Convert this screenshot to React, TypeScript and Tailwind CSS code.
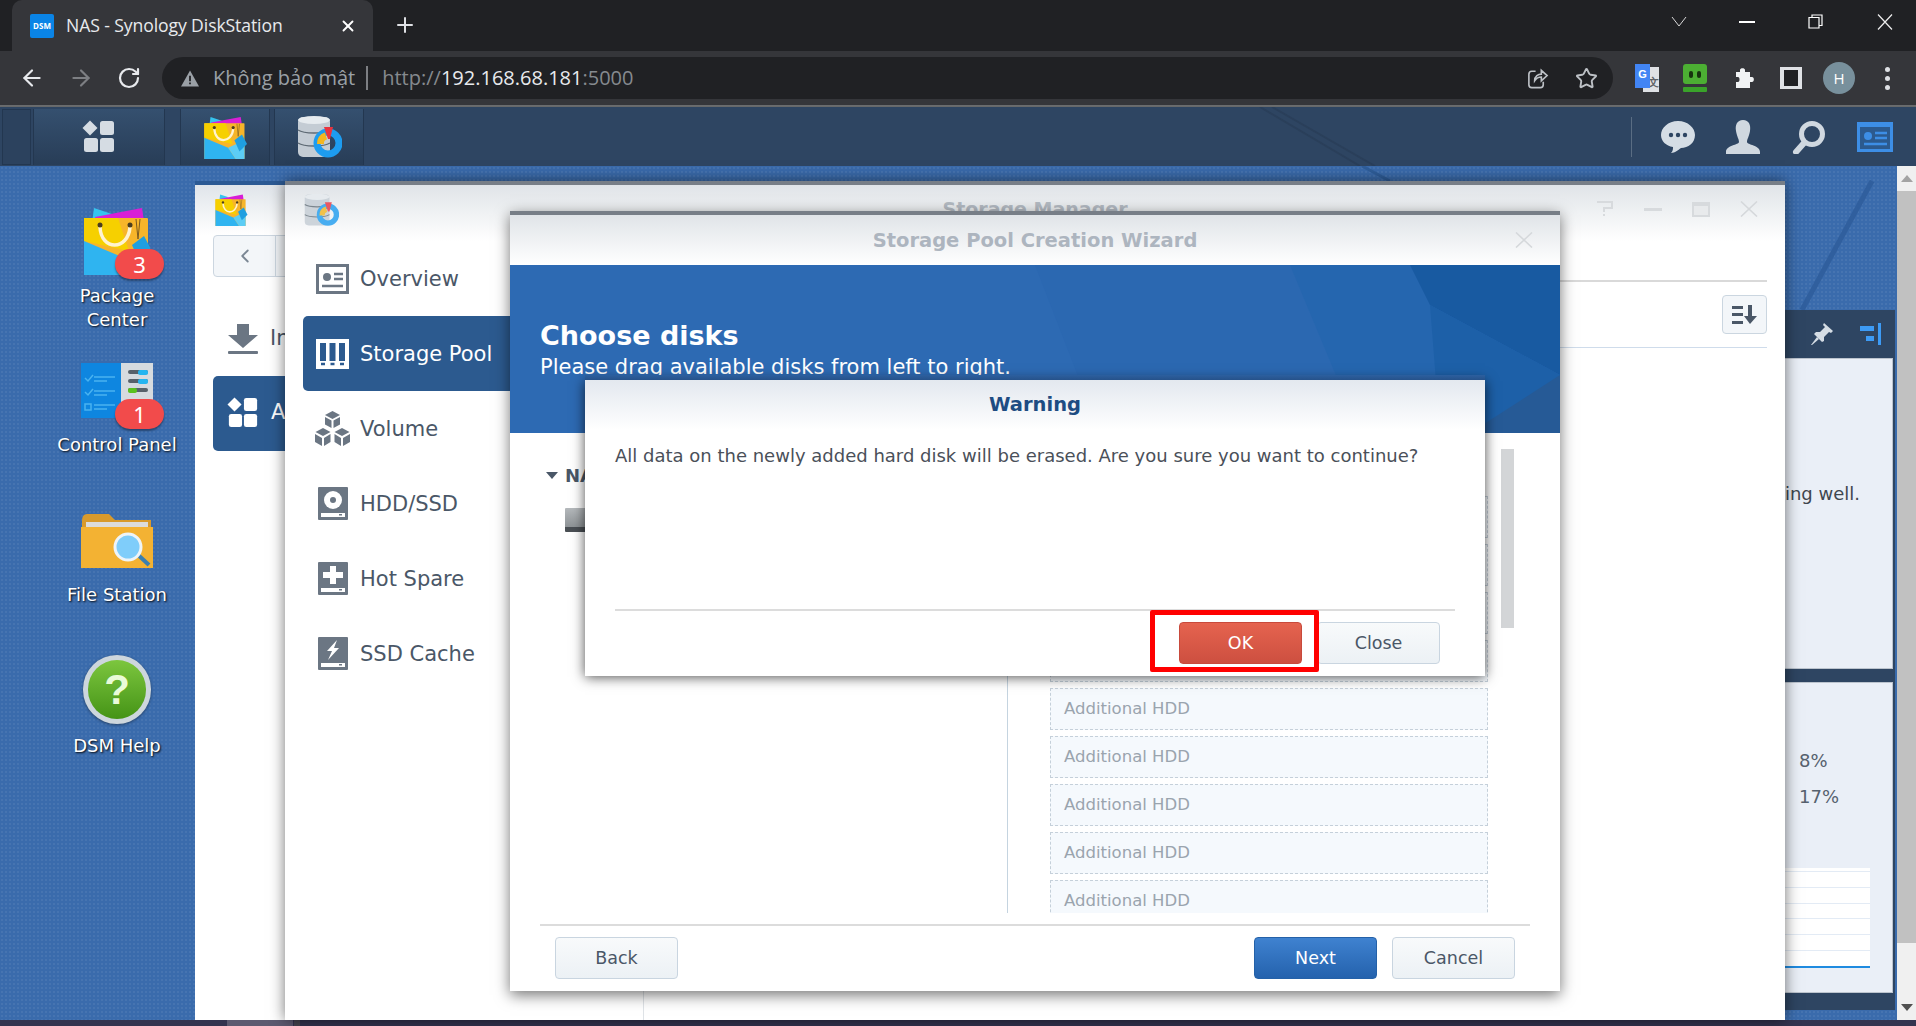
import React from "react";
import { ArrowLeft, ArrowRight, ChevronLeft, Plus, RotateCw, Star, X } from "lucide-react";

const dsmFont = "font-['DejaVu_Sans',sans-serif]";

const GridIcon = ({ className }: { className?: string }) => (
	<svg viewBox="0 0 34 34" className={className} fill="currentColor">
		<path d="M8 0.5 L15.5 8 L8 15.5 L0.5 8 Z" />
		<rect x="18" y="1" width="14" height="14" rx="2.5" />
		<rect x="2" y="18" width="14" height="14" rx="2.5" />
		<rect x="18" y="18" width="14" height="14" rx="2.5" />
	</svg>
);

const PackageIcon = ({ className }: { className?: string }) => (
	<svg viewBox="0 0 66 70" className={className}>
		<path d="M8 18 L10 3 L28 9 Z" fill="#36c3ee" />
		<path d="M11 12 L58 3 L60 16 L12 18 Z" fill="#d81fd6" />
		<rect x="0" y="13" width="64" height="57" rx="1" fill="#f7b52a" />
		<path d="M0 13 H34 L45 46 L0 36 Z" fill="#f6d000" />
		<path d="M0 36 L38 52 L50 70 H0 Z" fill="#2fb4f0" />
		<path d="M38 52 L64 40 V70 H50 Z" fill="#5ccdf5" />
		<path d="M16 22 C17 46 44 46 46 22" fill="none" stroke="#fff3d0" strokeWidth="3.5" />
		<circle cx="16" cy="20" r="2.5" fill="#4b3d1f" />
		<circle cx="46" cy="20" r="2.5" fill="#4b3d1f" />
		<path d="M52 14 L54 34 M56 14 L54 34" stroke="#7a5a20" strokeWidth="1" fill="none" />
		<path d="M48 40 L60 31 L68 46 L56 58 Z" fill="#1f9fe0" />
	</svg>
);

const StorageIcon = ({ className }: { className?: string }) => (
	<svg viewBox="0 0 46 44" className={className}>
		<rect x="2" y="2" width="32" height="40" rx="5" fill="#c4ccd4" />
		<ellipse cx="18" cy="5" rx="16" ry="4" fill="#e6ebef" />
		<path d="M2 15 C8 19 28 19 34 15 M2 28 C8 32 28 32 34 28" stroke="#5f6b75" strokeWidth="1.5" fill="none" />
		<circle cx="32" cy="28" r="11" fill="none" stroke="#1d9cf0" strokeWidth="7" />
		<path d="M21 29 A11 11 0 0 1 29 17.5 L31 24.5 A4 4 0 0 0 28 29 Z" fill="#f3b61f" />
		<path d="M28 12 L37 12 L34 24 L32 24 Z" fill="#e8343f" />
	</svg>
);

const ControlPanelIcon = () => (
	<svg viewBox="0 0 72 57" className="w-[72px] h-[57px]">
		<rect x="0" y="0" width="40" height="55" fill="#0e86e0" />
		<rect x="40" y="0" width="32" height="55" fill="#d6dbdf" />
		<path d="M4 15 L7 18 L12 12 M4 29 L7 32 L12 26" stroke="#49b3f0" strokeWidth="1.5" fill="none" />
		<path d="M13 14 H34 M13 18 H26 M13 28 H34 M13 32 H26 M13 42 H34 M13 46 H26" stroke="#49b3f0" strokeWidth="1.5" />
		<rect x="4" y="41" width="6" height="6" fill="none" stroke="#49b3f0" strokeWidth="1.5" />
		<rect x="47" y="7" width="20" height="4" rx="2" fill="#57616a" />
		<rect x="57" y="7" width="10" height="5" rx="2" fill="#24b5f0" />
		<rect x="47" y="16" width="20" height="4" rx="2" fill="#57616a" />
		<rect x="57" y="16" width="10" height="5" rx="2" fill="#24b5f0" />
		<rect x="47" y="25" width="20" height="4" rx="2" fill="#57616a" />
		<rect x="47" y="25" width="9" height="5" rx="2" fill="#5ac21e" />
	</svg>
);

const FolderIcon = () => (
	<svg viewBox="0 0 72 57" className="w-[72px] h-[57px]">
		<path d="M1 8 Q1 1 6 1 H28 L34 7 H70 V24 H1 Z" fill="#d89a2c" />
		<rect x="5" y="9" width="62" height="12" fill="#dcdcdc" />
		<path d="M0 14 H72 V55 H0 Z" fill="#f3b233" />
		<path d="M55 40 L68 52" stroke="#3a7fb0" strokeWidth="4" />
		<circle cx="47" cy="34" r="13" fill="#7fcdfa" stroke="#eef4f8" strokeWidth="3" />
	</svg>
);

const HelpIcon = () => (
	<div className="w-[68px] h-[69px] rounded-full bg-[#cdd6dd] flex items-center justify-center shadow-[0_1px_3px_rgba(0,0,0,0.4)]">
		<div className="w-[58px] h-[59px] rounded-full bg-gradient-to-b from-[#7cc63e] to-[#459415] flex items-center justify-center">
			<span className="text-[#e9fbd8] text-[42px] font-bold leading-none font-['Liberation_Sans',sans-serif]">?</span>
		</div>
	</div>
);

const DesktopIcon = ({ icon, label, badge, wrap, badgeClass, labelClass }: { icon: React.ReactNode; label: React.ReactNode; badge?: string; wrap: string; badgeClass?: string; labelClass: string }) => (
	<div className={`flex flex-col items-center w-[234px] ${wrap}`}>
		<div className="relative h-[72px] flex items-end justify-center">
			{icon}
			{badge && (
				<span className={`absolute left-[50%] ml-[-2px] w-[49px] h-[30px] rounded-[15px] bg-[#f24b4b] text-white text-[22px] leading-[30px] text-center shadow-[0_2px_2px_rgba(0,0,0,0.35)] ${badgeClass}`}>
					{badge}
				</span>
			)}
		</div>
		<div className={`text-white text-[18px] leading-[24px] text-center font-['DejaVu_Sans',sans-serif] [text-shadow:1px_1px_2px_rgba(0,0,0,0.95)] ${labelClass}`}>{label}</div>
	</div>
);

const Card = ({ dark, light }: { dark: string; light: string }) => (
	<svg viewBox="0 0 33 30" className="w-[33px] h-[30px] shrink-0">
		<rect x="0" y="0" width="33" height="30" fill={dark} />
		<rect x="3" y="3" width="27" height="24" fill={light} />
		<circle cx="11" cy="13" r="4" fill={dark} />
		<path d="M18 10 H27 M18 15 H27 M6 22 H27" stroke={dark} strokeWidth="2.5" />
	</svg>
);

const PoolIcon = () => (
	<svg viewBox="0 0 33 30" className="w-[33px] h-[30px] shrink-0">
		<rect width="33" height="30" fill="#fff" />
		<rect x="4" y="4" width="6" height="18" fill="#2c5a8f" />
		<rect x="13.5" y="4" width="6" height="18" fill="#2c5a8f" />
		<rect x="23" y="4" width="6" height="18" fill="#2c5a8f" />
		<path d="M5 25 H9 M14.5 25 H18.5 M24 25 H28" stroke="#2c5a8f" strokeWidth="2.5" />
	</svg>
);

const VolumeIcon = () => (
	<svg viewBox="0 0 35 35" className="w-[35px] h-[35px] shrink-0" fill="#6b7683">
		<path d="M17.5 0 L25 4 L17.5 8 L10 4 Z M10 6 L16.5 9.5 V17 L10 13.5 Z M25 6 L18.5 9.5 V17 L25 13.5 Z" />
		<path d="M8 17 L15.5 21 L8 25 L0.5 21 Z M0 23 L7 27 V35 L0 31 Z M15.5 23 L9 27 V35 L15.5 31 Z" />
		<path d="M27 17 L34.5 21 L27 25 L19.5 21 Z M19.5 23 L26 27 V35 L19.5 31 Z M35 23 L28 27 V35 L35 31 Z" />
	</svg>
);

const DriveIcon = ({ kind }: { kind: "hdd" | "spare" | "ssd" }) => (
	<svg viewBox="0 0 30 33" className="w-[30px] h-[33px] ml-[2px] mr-[1px] shrink-0">
		<rect width="30" height="33" rx="1" fill="#6b7683" />
		<rect x="3" y="26" width="24" height="4" fill="#fff" />
		<rect x="21" y="27" width="3" height="1.5" fill="#6b7683" />
		{kind === "hdd" && (
			<>
				<circle cx="15" cy="13" r="9" fill="#fff" />
				<circle cx="15" cy="13" r="3" fill="#6b7683" />
			</>
		)}
		{kind === "spare" && <path d="M12 4 H18 V10 H25 V16 H18 V22 H12 V16 H5 V10 H12 Z" fill="#fff" />}
		{kind === "ssd" && <path d="M19 3 L9 14 H14 L10 23 L21 11 H16 Z" fill="#fff" />}
	</svg>
);

const CloseCross = ({ className }: { className?: string }) => (
	<svg viewBox="0 0 18 16" className={className} fill="none" stroke="#d5d8db" strokeWidth="1.6">
		<path d="M1 0.5 L17 15.5 M17 0.5 L1 15.5" />
	</svg>
);

const navItems = [
	{ label: "Overview", icon: <Card dark="#6b7683" light="#fff" /> },
	{ label: "Storage Pool", icon: <PoolIcon />, active: true },
	{ label: "Volume", icon: <VolumeIcon /> },
	{ label: "HDD/SSD", icon: <DriveIcon kind="hdd" /> },
	{ label: "Hot Spare", icon: <DriveIcon kind="spare" /> },
	{ label: "SSD Cache", icon: <DriveIcon kind="ssd" /> },
];

const DsmButton = ({ label, variant }: { label: string; variant: "plain" | "blue" | "red" }) => {
	if (variant === "blue") {
		return <button className="w-[123px] h-[42px] rounded-[4px] border border-[#2461a8] bg-gradient-to-b from-[#3f82d0] to-[#2462ad] text-white text-[17.5px]">{label}</button>;
	}
	if (variant === "red") {
		return <button className="w-[123px] h-[42px] rounded-[4px] border border-[#c84a3c] bg-gradient-to-b from-[#e5634f] to-[#cd4f40] text-white text-[17.5px]">{label}</button>;
	}
	return <button className="w-[123px] h-[42px] rounded-[4px] border border-[#c9d5e0] bg-gradient-to-b from-[#f8fafb] to-[#ecf1f5] text-[#4a5767] text-[17.5px]">{label}</button>;
};

const BrowserChrome = () => (
	<div className="shrink-0 font-['Open_Sans',sans-serif]">
		<div className="h-[51px] bg-[#202124] flex items-end relative">
			<div className="ml-[12px] w-[361px] h-[51px] bg-[#35363a] rounded-t-[10px] flex items-center pl-[18px]">
				<div className="w-[24px] h-[24px] bg-[#0a84e6] rounded-[2px] text-white text-[8px] font-bold flex items-center justify-center">DSM</div>
				<span className="ml-[12px] text-[#e8eaed] text-[17.6px] tracking-[-0.1px] whitespace-nowrap">NAS - Synology DiskStation</span>
				<X className="ml-auto mr-[16px] w-[18px] h-[18px] text-white" strokeWidth={2.5} />
			</div>
			<Plus className="ml-[20px] mb-[14px] w-[24px] h-[24px] text-[#dfe1e5]" strokeWidth={2} />
			<div className="ml-auto h-[51px] flex items-start text-white">
				<svg viewBox="0 0 16 10" className="w-[16px] h-[10px] mt-[17px] mr-[52px]" fill="none" stroke="#d8d8d8"><path d="M1 0 L8 9 L15 0" /></svg>
				<div className="w-[16px] h-[2px] bg-white mt-[21px] mr-[53px]" />
				<svg viewBox="0 0 15 15" className="w-[15px] h-[15px] mt-[14px] mr-[54px]" fill="none" stroke="#fff" strokeWidth="1.2"><path d="M1 3.5 H11 V14 H1 Z M4 3.5 V1 H14 V11.5 H11" /></svg>
				<svg viewBox="0 0 16 16" className="w-[16px] h-[16px] mt-[14px] mr-[23px]" fill="none" stroke="#eee" strokeWidth="1.2"><path d="M1 0.5 L15 15.5 M15 0.5 L1 15.5" /></svg>
			</div>
		</div>
		<div className="h-[54px] bg-[#35363a] flex items-center">
			<ArrowLeft className="ml-[19px] w-[26px] h-[26px] text-[#e8eaed]" strokeWidth={2} />
			<ArrowRight className="ml-[23px] w-[26px] h-[26px] text-[#7d7f83]" strokeWidth={2} />
			<RotateCw className="ml-[23px] w-[24px] h-[24px] text-[#e8eaed]" strokeWidth={2.2} />
			<div className="ml-[21px] w-[1451px] h-[42px] bg-[#202124] rounded-[21px] flex items-center pl-[18px] pr-[16px]">
				<svg viewBox="0 0 20 18" className="w-[18px] h-[17px] ml-[1px]" fill="#9aa0a6"><path d="M10 0 L20 18 H0 Z" /><path d="M9 6 H11 V12 H9 Z M9 13.5 H11 V15.5 H9 Z" fill="#202124" /></svg>
				<span className="ml-[14px] text-[#9aa0a6] text-[20px] whitespace-nowrap">Không bảo mật</span>
				<div className="ml-[11px] w-[2px] h-[24px] bg-[#7d7f83]" />
				<span className="ml-[14px] text-[20px] text-[#868a8f] whitespace-nowrap">http://<span className="text-[#e8eaed]">192.168.68.181</span>:5000</span>
				<svg viewBox="0 0 24 24" className="ml-auto w-[23px] h-[24px]" fill="none" stroke="#bdc1c6" strokeWidth="1.7">
					<path d="M10 5 H6 Q3 5 3 8 V19 Q3 22 6 22 H15 Q18 22 18 19 V16" />
					<path d="M9 15 C9 10 13 8 16 8 V4 L22 9.5 L16 15 V11 C13 11 11 12 9 15 Z" />
				</svg>
				<Star className="ml-[26px] w-[23px] h-[23px] text-[#bdc1c6] mr-[-1px]" strokeWidth={2} />
			</div>
			<div className="ml-[22px] relative w-[24px] h-[28px] shrink-0">
				<div className="absolute left-[8px] top-[3px] w-[16px] h-[25px] bg-[#dfe1e5] text-[#5f6368] text-[11px] font-bold pl-[5px] pt-[7px]">文</div>
				<div className="absolute left-0 top-0 w-[15px] h-[24px] bg-[#4285f4] text-white text-[11px] font-bold text-center leading-[21px] font-['Liberation_Sans',sans-serif]">G</div>
			</div>
			<div className="ml-[24px] w-[24px] shrink-0 flex flex-col">
				<div className="h-[20px] rounded-[3px] bg-[#4caf33] flex items-center justify-center gap-[4px]">
					<span className="w-[4px] h-[7px] rounded-[2px] bg-[#17330f]" />
					<span className="w-[4px] h-[7px] rounded-[2px] bg-[#17330f]" />
				</div>
				<div className="h-[5px] mt-[3px] rounded-[1px] bg-[#3aa32a]" />
			</div>
			<svg viewBox="0 0 24 24" className="ml-[24px] w-[24px] h-[24px] shrink-0" fill="#f1f3f4">
				<path d="M9 4 C9 1.5 14 1.5 14 4 V6 H19 V11 H21 C23.5 11 23.5 16 21 16 H19 V22 H5 V16 H7 C9 16 9 11 7 11 H5 V6 H9 Z" />
			</svg>
			<div className="ml-[25px] w-[22px] h-[22px] border-[3px] border-[#dfe1e5] border-x-[4px] bg-[#202124] shrink-0" />
			<div className="ml-[21px] w-[32px] h-[32px] rounded-full bg-[#78909c] text-white text-[15px] flex items-center justify-center shrink-0">H</div>
			<div className="ml-[30px] flex flex-col gap-[4px] shrink-0">
				<span className="w-[5px] h-[5px] rounded-full bg-[#dfe1e5]" />
				<span className="w-[5px] h-[5px] rounded-full bg-[#dfe1e5]" />
				<span className="w-[5px] h-[5px] rounded-full bg-[#dfe1e5]" />
			</div>
		</div>
		<div className="h-[2px] bg-[#6a6c6e]" />
	</div>
);

const Taskbar = () => (
	<div className="h-[59px] shrink-0 bg-[#2e4562] flex items-stretch relative shadow-[0_1px_2px_rgba(0,0,0,0.4)]">
		<svg viewBox="0 0 300 59" className="absolute left-[1200px] top-0 w-[300px] h-[59px]" fill="none" stroke="#2a3f5a" strokeWidth="2">
			<path d="M60 0 L160 59 M72 0 L175 59" />
		</svg>
		<div className="ml-[2px] mt-[2px] mb-[1px] w-[29px] border border-[#233750] bg-[#2c425e]" />
		<div className="ml-[2px] mt-[2px] mb-[1px] w-[132px] border-x border-[#233750] bg-gradient-to-b from-[#35506f] to-[#283d57] flex items-center justify-center">
			<GridIcon className="w-[34px] h-[34px] text-[#d5dce3]" />
		</div>
		<div className="ml-[15px] mt-[2px] mb-[1px] w-[90px] border-x border-[#233750] bg-gradient-to-b from-[#35506f] to-[#283d57] flex items-center justify-center">
			<PackageIcon className="w-[46px] h-[44px]" />
		</div>
		<div className="ml-[4px] mt-[2px] mb-[1px] w-[90px] border-x border-[#233750] bg-gradient-to-b from-[#35506f] to-[#283d57] flex items-center justify-center">
			<StorageIcon className="w-[46px] h-[44px]" />
		</div>
		<div className="ml-auto flex items-center pr-[23px] relative">
			<div className="w-px h-[40px] bg-[#5a6d83] mr-[29px]" />
			<svg viewBox="0 0 34 34" className="w-[34px] h-[34px] mr-[31px]" fill="#d5dde5">
				<path d="M17 1 C27 1 34 8 34 15 C34 23 27 28 20 28 C17 30 14 33 10 33 C12 31 12 29 12 27 C5 26 0 21 0 15 C0 8 7 1 17 1 Z" />
				<circle cx="10" cy="15" r="2.2" fill="#2e4562" />
				<circle cx="17" cy="15" r="2.2" fill="#2e4562" />
				<circle cx="24" cy="15" r="2.2" fill="#2e4562" />
			</svg>
			<svg viewBox="0 0 34 34" className="w-[34px] h-[34px] mr-[32px]" fill="#d0d8e0">
				<path d="M17 0 C23 0 25 5 24 11 C23 17 21 19 21 22 C21 25 34 25 34 32 V34 H0 V32 C0 25 13 25 13 22 C13 19 11 17 10 11 C9 5 11 0 17 0 Z" />
			</svg>
			<svg viewBox="0 0 34 34" className="w-[34px] h-[34px] mr-[31px]" fill="none" stroke="#d0d8e0">
				<circle cx="20" cy="14" r="10.5" strokeWidth="5" />
				<path d="M12 23 L4 32" strokeWidth="6" strokeLinecap="round" />
			</svg>
			<div className="w-[36px] h-[30px] bg-[#3d8ee6] border-t-[3px] border-[#3d8ee6] flex items-center justify-center">
				<svg viewBox="0 0 30 22" className="w-[30px] h-[22px]">
					<rect width="30" height="22" fill="#2c5a8f" />
					<circle cx="8" cy="9" r="4" fill="#3d8ee6" />
					<path d="M15 6 H27 M15 11 H27 M4 17 H27" stroke="#3d8ee6" strokeWidth="2.4" />
				</svg>
			</div>
		</div>
	</div>
);

const PackageWindow = () => (
	<div className="absolute left-[195px] top-[181px] w-[200px] h-[839px] bg-white border-t-4 border-[#2c5a94] flex flex-col">
		<div className="h-[50px] shrink-0 bg-gradient-to-b from-[#e0e5ea] to-white pl-[19px] pt-[8px]">
			<PackageIcon className="w-[34px] h-[33px]" />
		</div>
		<div className="ml-[18px] w-[110px] h-[42px] shrink-0 border border-[#ccd6e0] rounded-[4px] bg-[#f3f6f9] flex">
			<div className="w-[62px] border-r border-[#ccd6e0] flex items-center justify-center">
				<ChevronLeft className="w-[22px] h-[22px] text-[#7b8794]" />
			</div>
		</div>
		<div className={`mt-[46px] ml-[33px] flex items-center gap-[12px] text-[21px] text-[#4a5767] whitespace-nowrap ${dsmFont}`}>
			<svg viewBox="0 0 30 30" className="w-[30px] h-[30px] shrink-0" fill="#6b7683">
				<path d="M9 0 H21 V11 H30 L15 24 L0 11 H9 Z" />
				<rect y="27" width="30" height="3" rx="1" />
			</svg>
			Installed
		</div>
		<div className={`mt-[21px] ml-[18px] h-[75px] rounded-l-[5px] bg-[#2c5a8f] flex items-center gap-[12px] pl-[14px] text-[21px] text-white whitespace-nowrap ${dsmFont}`}>
			<GridIcon className="w-[32px] h-[32px] text-white shrink-0" />
			All Packages
		</div>
	</div>
);

const StorageWindow = () => (
	<div className={`absolute left-[285px] top-[181px] w-[1500px] h-[839px] bg-white border-t-4 border-[#777e87] flex flex-col shadow-[0_0_14px_rgba(0,0,0,0.55)] ${dsmFont}`}>
		<div className="h-[56px] shrink-0 bg-gradient-to-b from-[#e0e4e8] to-white relative flex items-start pl-[18px] pt-[8px]">
			<StorageIcon className="w-[36px] h-[34px] opacity-80" />
			<span className="absolute left-0 right-0 top-[10px] text-center text-[19px] font-bold text-[#b3bac2]">Storage Manager</span>
			<div className="ml-auto flex items-center gap-[30px] pr-[27px] pt-[8px]">
				<svg viewBox="0 0 18 16" className="w-[18px] h-[16px]" fill="none" stroke="#d7dadd" strokeWidth="2"><path d="M1 1 H16 V7 H8 V11 M8 13 V15" /></svg>
				<div className="w-[18px] h-[3px] bg-[#d7dadd]" />
				<div className="w-[18px] h-[15px] border-[2px] border-t-[4px] border-[#d7dadd] bg-[#e8eaec]" />
				<CloseCross className="w-[18px] h-[16px]" />
			</div>
		</div>
		<div className="flex-1 flex">
			<div className="w-[359px] shrink-0 border-r border-[#dfe3e7] pl-[18px] pr-[10px]">
				{navItems.map((item) => (
					<div key={item.label} className={`h-[75px] flex items-center gap-[11px] pl-[13px] rounded-[5px] text-[21px] ${item.active ? "bg-[#2c5a8f] text-white" : "text-[#4a5767]"}`}>
						<span className="w-[33px] flex justify-center">{item.icon}</span>
						<span className="pt-[2px]">{item.label}</span>
					</div>
				))}
			</div>
			<div className="flex-1 pr-[18px] pt-[39px]">
				<div className="h-[2px] bg-[#d9d9d9]" />
				<div className="h-[66px] border-b border-[#cfdceb] flex items-center justify-end">
					<div className="w-[45px] h-[39px] border border-[#cbd6e0] rounded-[4px] bg-[#f3f6f9] flex items-center justify-center">
						<svg viewBox="0 0 25 20" className="w-[25px] h-[20px]" fill="#4a5767">
							<rect y="1" width="11" height="3" />
							<rect y="8" width="11" height="3" />
							<rect y="16" width="11" height="3" />
							<path d="M16 0 H20 V11 H25 L18 19 L12 11 H16 Z" />
						</svg>
					</div>
				</div>
			</div>
		</div>
	</div>
);

const WizardWindow = () => (
	<div className={`absolute left-[510px] top-[211px] w-[1050px] h-[780px] bg-white border-t-4 border-[#777e87] flex flex-col shadow-[0_4px_14px_rgba(0,0,0,0.55)] ${dsmFont}`}>
		<div className="h-[50px] shrink-0 bg-gradient-to-b from-[#e0e4e8] to-white flex items-center justify-center relative">
			<span className="text-[19.5px] font-bold text-[#adb5bf] pt-[1px]">Storage Pool Creation Wizard</span>
			<CloseCross className="absolute right-[27px] top-[17px] w-[18px] h-[16px]" />
		</div>
		<div className="h-[168px] shrink-0 bg-[#2d6ab3] relative overflow-hidden pl-[30px] pt-[55px]">
			<svg viewBox="0 0 1050 168" className="absolute inset-0 w-[1050px] h-[168px]">
				<polygon points="525,0 1050,0 1050,168 590,168" fill="#2b68b1" />
				<polygon points="780,0 1050,0 1050,168 850,168" fill="#2566af" />
				<polygon points="900,0 1050,0 1050,110 920,40" fill="#185aa1" />
				<polygon points="920,40 1050,110 1050,168 930,168" fill="#1d60a8" />
				<polygon points="960,168 1050,110 1050,168" fill="#265a96" />
			</svg>
			<div className="relative text-white text-[27px] font-bold leading-[32px]">Choose disks</div>
			<div className="relative mt-[3px] text-white text-[21px] leading-[24px]">Please drag available disks from left to right.</div>
		</div>
		<div className="h-[480px] shrink-0 flex overflow-hidden relative">
			<div className="w-[498px] shrink-0 border-r border-[#c5d4e0] pl-[36px] pt-[29px]">
				<div className="flex items-center gap-[7px] text-[18px] font-bold text-[#4a5767]">
					<span className="w-0 h-0 border-x-[6px] border-x-transparent border-t-[7px] border-t-[#4a5767]" />
					NAS
				</div>
				<div className="mt-[19px] ml-[19px] w-[36px] h-[24px] rounded-[1px] bg-gradient-to-b from-[#b5b9bc] to-[#8e9396] border-b-[5px] border-[#4a4f54]" />
			</div>
			<div className="pl-[42px] pt-[63px] flex flex-col gap-[6px]">
				{Array.from({ length: 9 }).map((_, i) => (
					<div key={i} className="w-[438px] h-[42px] shrink-0 border border-dashed border-[#c5d0da] bg-[#f5f9fd] flex items-center pl-[13px] text-[16.5px] text-[#9aa4ae]">
						Additional HDD
					</div>
				))}
			</div>
			<div className="absolute left-[991px] top-[16px] w-[13px] h-[179px] bg-[#d3d5d7]" />
		</div>
		<div className="flex-1 flex flex-col px-[30px]">
			<div className="mt-[11px] h-[2px] bg-[#dcdcdc] w-[990px]" />
			<div className="mt-[11px] flex pl-[15px] pr-[15px] gap-[15px]">
				<DsmButton label="Back" variant="plain" />
				<div className="ml-auto" />
				<DsmButton label="Next" variant="blue" />
				<DsmButton label="Cancel" variant="plain" />
			</div>
		</div>
	</div>
);

const WarningDialog = () => (
	<div className={`absolute left-[585px] top-[380px] w-[900px] h-[296px] bg-white flex flex-col shadow-[0_1px_12px_rgba(0,0,0,0.7)] ${dsmFont}`}>
		{/* dialog's top shadow band, it hides the tail of the banner text */}
		<div className="absolute left-0 right-0 top-[-5px] h-[5px] bg-gradient-to-b from-[#2c5f9f] to-[#26528a]" />
		<div className="h-[50px] shrink-0 bg-gradient-to-b from-[#e3e8ef] to-white flex items-center justify-center text-[19.5px] font-bold text-[#1e4c82]">Warning</div>
		<div className="flex-1 px-[30px] pt-[15px] text-[18px] leading-[22px] text-[#4a5059] whitespace-nowrap">
			All data on the newly added hard disk will be erased. Are you sure you want to continue?
		</div>
		<div className="mx-[30px] h-[2px] bg-[#dcdcdc]" />
		<div className="h-[65px] shrink-0 flex items-start justify-end gap-[15px] pt-[11px] pr-[45px]">
			<DsmButton label="OK" variant="red" />
			<DsmButton label="Close" variant="plain" />
		</div>
	</div>
);

const WidgetPanel = () => (
	<div className={`absolute left-[1500px] top-[310px] w-[395px] h-[700px] bg-[#2e4562] pr-[2px] flex flex-col ${dsmFont}`}>
		<div className="h-[48px] shrink-0 flex items-center justify-end pr-[11px] gap-[27px]">
			<svg viewBox="0 0 22 22" className="w-[22px] h-[22px]" fill="#d5dde5">
				<path d="M13 0 L22 8 L20 10 L18 9 L13 14 L13 18 L11 19 L3 11 L5 9 L9 9 L14 4 L12 2 Z" />
				<path d="M6 14 L0 22 L1 22 L8 16 Z" />
			</svg>
			<svg viewBox="0 0 22 22" className="w-[22px] h-[22px]" fill="#3d9bf5">
				<rect y="3" width="14" height="5" />
				<rect x="6" y="13" width="8" height="5" />
				<rect x="18" y="0" width="3" height="22" />
			</svg>
		</div>
		<div className="h-[311px] shrink-0 bg-[#eaeff7] border border-[#bcc4ce] pt-[121px] pr-[32px] text-right text-[18px] text-[#3f4750] whitespace-nowrap overflow-hidden">
			<span>System is working well.</span>
		</div>
		<div className="h-[13px] shrink-0" />
		<div className="h-[311px] shrink-0 bg-[#eaeff7] border border-[#bcc4ce] pl-[298px] pt-[67px] text-[18px] text-[#56616e] flex flex-col">
			<span className="leading-[22px]">8%</span>
			<span className="mt-[14px] leading-[22px]">17%</span>
			<div className="mt-[60px] ml-[-98px] w-[169px] h-[100px] bg-white pt-[3px] flex flex-col border-b-[2px] border-[#1f8be0]">
				{Array.from({ length: 6 }).map((_, i) => (
					<div key={i} className="h-[16.5px] border-t border-[#e3ebf5]" />
				))}
			</div>
		</div>
	</div>
);

const PageScrollbar = () => (
	<div className="absolute right-0 top-[166px] w-[19px] h-[854px] bg-[#f0f0f0] flex flex-col">
		<div className="h-[25px] shrink-0 flex items-center justify-center">
			<span className="w-0 h-0 border-x-[6px] border-x-transparent border-b-[7px] border-b-[#a3a3a3]" />
		</div>
		<div className="h-[752px] bg-[#c1c1c1]" />
		<div className="flex-1 flex items-end justify-center pb-[9px]">
			<span className="w-0 h-0 border-x-[6px] border-x-transparent border-t-[7px] border-t-[#505050]" />
		</div>
	</div>
);

export default function App() {
	return (
		<div className="relative w-[1916px] h-[1026px] overflow-hidden flex flex-col bg-[#3a6bac]">
			<BrowserChrome />
			<Taskbar />
			<div className="flex-1 bg-[#3a6bac] bg-[radial-gradient(circle,rgba(255,255,255,0.06)_1px,transparent_1px)] bg-[length:4px_4px] relative">
				<svg viewBox="0 0 1916 854" className="absolute inset-0 w-[1916px] h-[854px]" fill="none">
					<path d="M1362 0 L1390 15" stroke="#2f5e9a" strokeWidth="3" />
					<path d="M1872 15 L1802 144" stroke="#305f9e" strokeWidth="5" />
				</svg>
				<div className="relative pt-[39px] flex flex-col">
					<DesktopIcon icon={<PackageIcon className="w-[66px] h-[70px] mb-[2px]" />} label={<>Package<br />Center</>} badge="3" badgeClass="bottom-[-2px]" labelClass="mt-[7px]" wrap="h-[143px]" />
					<DesktopIcon icon={<ControlPanelIcon />} label="Control Panel" badge="1" badgeClass="bottom-[-9px]" labelClass="mt-[13px]" wrap="h-[150px]" />
					<DesktopIcon icon={<FolderIcon />} label="File Station" labelClass="mt-[13px]" wrap="h-[154px]" />
					<DesktopIcon icon={<HelpIcon />} label="DSM Help" labelClass="mt-[10px]" wrap="h-[120px]" />
				</div>
			</div>
			<div className="h-[6px] shrink-0 bg-[#33334f] flex">
				<div className="ml-[227px] w-[66px] bg-[#5c5a70]" />
				<div className="ml-[1px] w-[6px] bg-[#45454f]" />
			</div>
			<WidgetPanel />
			<PageScrollbar />
			<PackageWindow />
			<StorageWindow />
			<WizardWindow />
			<WarningDialog />
			<div className="absolute left-[1150px] top-[610px] w-[169px] h-[62px] border-[5px] border-[#ff0000] rounded-[2px]" />
		</div>
	);
}
